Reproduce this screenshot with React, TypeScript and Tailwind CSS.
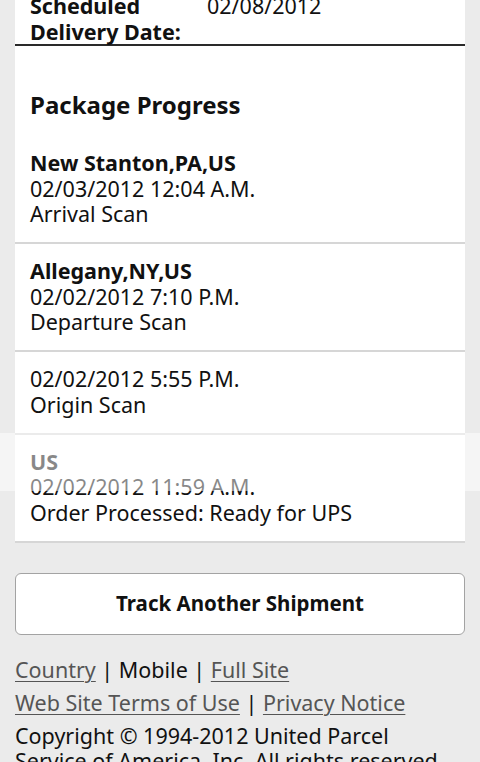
import React from "react";

type Row = { place?: string; date: string; activity: string };

const rows: Row[] = [
  { place: "New Stanton,PA,US", date: "02/03/2012 12:04 A.M.", activity: "Arrival Scan" },
  { place: "Allegany,NY,US", date: "02/02/2012 7:10 P.M.", activity: "Departure Scan" },
  { date: "02/02/2012 5:55 P.M.", activity: "Origin Scan" },
  { place: "US", date: "02/02/2012 11:59 A.M.", activity: "Order Processed: Ready for UPS" },
];

export default function App() {
  return (
    <div
      className="relative h-[762px] w-[480px] overflow-hidden bg-[#ebebeb] text-[#111] text-[21.5px] leading-[25.5px]"
      style={{ fontFamily: '"Noto Sans", "Open Sans", sans-serif' }}
    >
      <div className="mx-[15px] -mt-[7px] bg-white border-b-2 border-[#d6d6d6]">
        <div className="grid grid-cols-[177px_1fr] px-[15px]">
          <div className="font-bold">
            Scheduled
            <br />
            Delivery Date:
          </div>
          <div>02/08/2012</div>
        </div>
        <div className="h-[2px] bg-[#2a2a2a]" />
        <div className="px-[15px] pt-[44px] pb-[16px]">
          <h2 className="font-bold text-[24px] leading-[30px]">Package Progress</h2>
        </div>
        {rows.map((r, i) => (
          <div
            key={i}
            className={
              i < rows.length - 1
                ? "px-[15px] pt-[14px] pb-[15.5px] border-b-2 border-[#d6d6d6]"
                : "px-[15px] pt-[14px] pb-[16px]"
            }
          >
            {r.place && <div className="font-bold">{r.place}</div>}
            <div>{r.date}</div>
            <div>{r.activity}</div>
          </div>
        ))}
      </div>

      <div className="mx-[15px] mt-[30px]">
        <button className="flex h-[62px] w-full items-center justify-center rounded-[6px] border border-[#a3a3a3] bg-white text-[20.5px] font-bold text-[#111]">
          Track Another Shipment
        </button>
      </div>

      <div className="mx-[15px] mt-[18px] w-[450px]">
        <div className="leading-[33px]">
          <a className="text-[#555] underline decoration-1 underline-offset-[3px]">Country</a>
          <span> | Mobile | </span>
          <a className="text-[#555] underline decoration-1 underline-offset-[3px]">Full Site</a>
        </div>
        <div className="leading-[33px]">
          <a className="text-[#555] underline decoration-1 underline-offset-[3px]">Web Site Terms of Use</a>
          <span> | </span>
          <a className="text-[#555] underline decoration-1 underline-offset-[3px]">Privacy Notice</a>
        </div>
        <p className="mt-[3.5px]">
          Copyright © 1994-2012 United Parcel Service of America, Inc. All rights reserved.
        </p>
      </div>

      <div className="pointer-events-none absolute left-0 top-[433px] h-[58px] w-full bg-white/50" />
    </div>
  );
}
